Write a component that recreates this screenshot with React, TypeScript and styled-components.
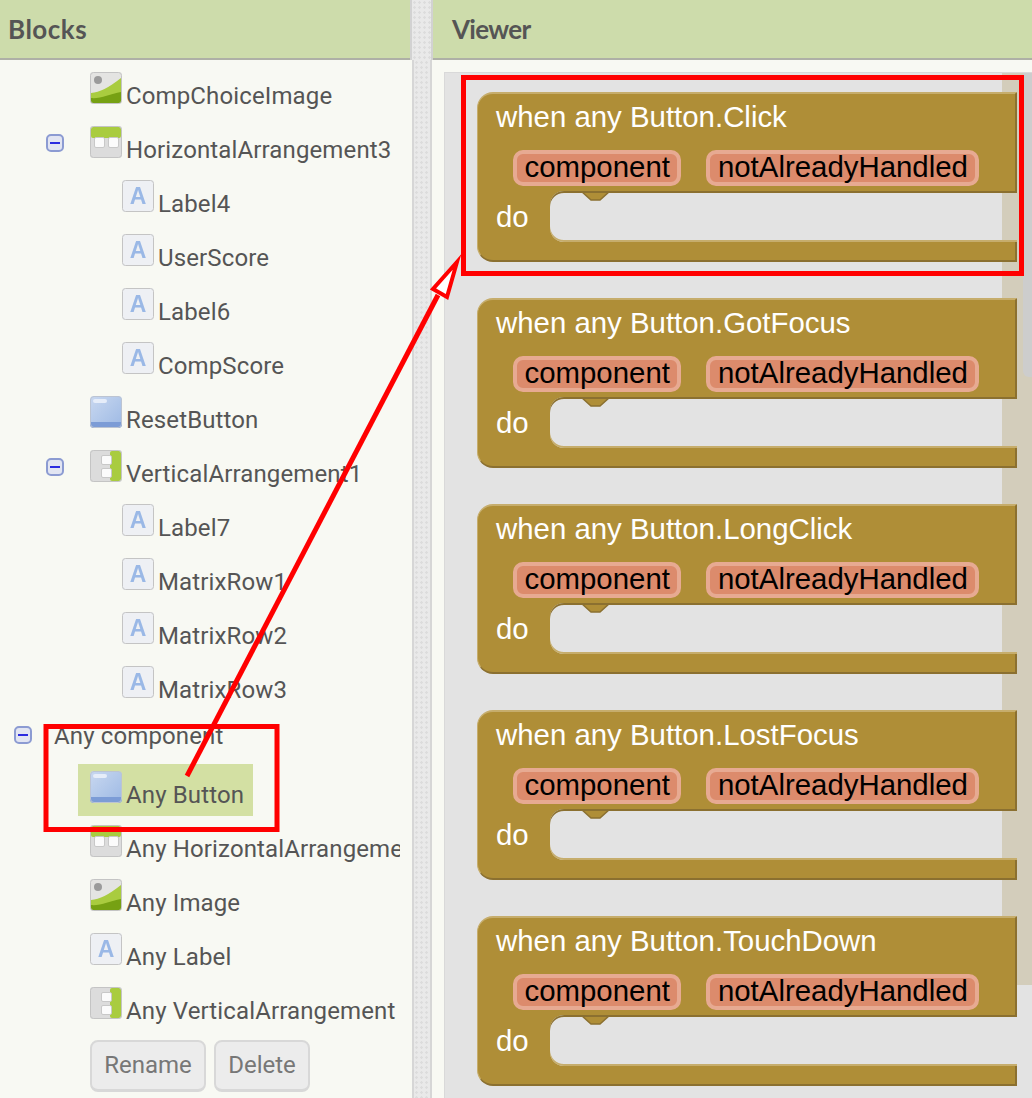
import React from 'react';
import styled, { createGlobalStyle } from 'styled-components';

const GOLD = '#af8e37';
const GOLD_LIGHT = '#c6ad6c';
const GOLD_DARK = '#8b7030';
const CREAM = '#f8f9f3';

const GlobalStyle = createGlobalStyle`
  html, body {
    margin: 0;
    padding: 0;
    background: ${CREAM};
    overflow: hidden;
  }
`;

const Page = styled.div`
  position: relative;
  display: flex;
  width: 1032px;
  height: 1098px;
  overflow: hidden;
  background: ${CREAM};
  font-family: Roboto, sans-serif;
  color: #555;
`;

const Pane = styled.div<{ $width?: number }>`
  display: flex;
  flex-direction: column;
  flex: ${(p) => (p.$width ? `0 0 ${p.$width}px` : '1 1 0')};
  min-width: 0;
`;

const PaneHeader = styled.div<{ $pad: number; $spacing: number }>`
  box-sizing: border-box;
  flex: 0 0 60px;
  height: 60px;
  padding-left: ${(p) => p.$pad}px;
  background: #cddcab;
  border-bottom: 2px solid #aeb0a6;
  font-family: Lato, sans-serif;
  font-weight: 700;
  font-size: 26px;
  line-height: 58px;
  letter-spacing: ${(p) => p.$spacing}px;
  color: #555;
`;

const SPECKLE = `
  background-color: #e9e9e9;
  background-image: radial-gradient(circle, #dcdcdc 1px, transparent 1.5px);
  background-size: 5px 5px;
`;

const Splitter = styled.div`
  flex: 0 0 23px;
  display: flex;
  flex-direction: column;
  background: ${CREAM};
`;

const SplitterCap = styled.div`
  box-sizing: border-box;
  flex: 0 0 60px;
  ${SPECKLE}
  border-left: 2px solid #d2d2d2;
  border-right: 2px solid #d2d2d2;
`;

const SplitterBar = styled.div`
  box-sizing: border-box;
  flex: 1;
  margin: 0 1px 0 2px;
  ${SPECKLE}
  border-left: 2px solid #d6d6d6;
  border-right: 2px solid #d6d6d6;
`;

const Tree = styled.div`
  flex: 1;
  width: 400px;
  padding-top: 5px;
  overflow: hidden;
`;

const Row = styled.div<{ $indent: number; $short?: boolean }>`
  display: flex;
  align-items: flex-start;
  height: ${(p) => (p.$short ? 49 : 52)}px;
  margin-bottom: 2px;
  padding-left: ${(p) => p.$indent}px;
  white-space: nowrap;
`;

const Toggle = styled.span<{ $top: number }>`
  box-sizing: border-box;
  flex: 0 0 18px;
  display: flex;
  align-items: center;
  justify-content: center;
  width: 18px;
  height: 18px;
  margin: ${(p) => p.$top}px 14px 0 -32px;
  background: #e2e5f2;
  border: 2px solid #8c9bd2;
  border-radius: 5px;

  &::after {
    content: '';
    width: 10px;
    height: 2px;
    background: #2c2ce0;
  }
`;

const Item = styled.div<{ $selected?: boolean; $bare?: boolean }>`
  display: flex;
  align-items: flex-start;
  gap: 4px;
  height: 100%;
  padding: 0 9px 0 ${(p) => (p.$bare ? 8 : 12)}px;
  background: ${(p) => (p.$selected ? '#d3e0a3' : 'transparent')};
`;

const IconBox = styled.svg`
  flex: 0 0 32px;
  width: 32px;
  height: 32px;
  margin-top: 7px;
  filter: blur(0.4px);
`;

const ItemLabel = styled.span<{ $top: number }>`
  margin-top: ${(p) => p.$top}px;
  font-size: 24px;
  line-height: 30px;
  letter-spacing: 0.13px;
  color: #555;
`;

const Actions = styled.div`
  display: flex;
  gap: 8px;
  margin: 8px 0 0 90px;
`;

const ActionButton = styled.div<{ $width: number }>`
  box-sizing: border-box;
  width: ${(p) => p.$width}px;
  height: 52px;
  background: #ececec;
  border: 2px solid #d8d8d8;
  border-bottom-width: 3px;
  border-radius: 8px;
  font-size: 24px;
  line-height: 47px;
  text-align: center;
  color: #777;
`;

const Gutter = styled.div`
  flex: 1;
  min-height: 0;
  padding: 12px 0 0 11px;
  background: ${CREAM};
`;

const Viewer = styled.div`
  position: relative;
  box-sizing: border-box;
  height: 100%;
  padding: 19px 0 0 32px;
  overflow: hidden;
  background: #e3e3e3;
  border-top: 1px solid #d9d9d9;
  border-left: 1px solid #d9d9d9;
`;

const ScrollTrack = styled.div`
  position: absolute;
  top: 0;
  right: 0;
  width: 30px;
  height: 912px;
  background: #d3cdbb;
`;

const ScrollThumb = styled.div`
  position: absolute;
  top: 0;
  right: 0;
  width: 9px;
  height: 304px;
  background: #cdcdcd;
  border-bottom-left-radius: 6px;
`;

const Block = styled.div`
  position: relative;
  display: flex;
  flex-direction: column;
  width: 540px;
  height: 170px;
  margin-bottom: 36px;
  font-family: 'Liberation Sans', Arial, sans-serif;
  font-size: 29.4px;
`;

const BlockHead = styled.div`
  box-sizing: border-box;
  height: 99px;
  padding: 6px 0 0 18px;
  background: ${GOLD};
  border-top: 2px solid ${GOLD_LIGHT};
  border-left: 1px solid ${GOLD_LIGHT};
  border-right: 2px solid ${GOLD_DARK};
  border-top-left-radius: 16px;
`;

const BlockTitle = styled.div`
  height: 34px;
  line-height: 34px;
  color: #fff;
`;

const Params = styled.div`
  display: flex;
  gap: 25px;
  margin: 16px 0 0 17px;
`;

const Param = styled.div`
  box-sizing: border-box;
  height: 36px;
  padding: 0 7.5px;
  background: #dc8b6c;
  border: 4px solid #e7aa92;
  border-radius: 10px;
  line-height: 26px;
  color: #000;
  white-space: nowrap;
`;

const BlockBody = styled.div`
  display: flex;
  height: 51px;
  overflow: hidden;
`;

const DoLabel = styled.div`
  position: relative;
  z-index: 1;
  box-sizing: border-box;
  flex: 0 0 60px;
  padding-left: 18px;
  border-left: 1px solid ${GOLD_LIGHT};
  line-height: 51px;
  color: #fff;
`;

const Slot = styled.div`
  position: relative;
  flex: 1;
  margin-left: 13px;
  border-radius: 14px 0 0 14px;
  box-shadow:
    inset 0 2px 0 ${GOLD_DARK},
    inset 0 -2px 0 ${GOLD_LIGHT},
    0 0 0 80px ${GOLD};
`;

const Notch = styled.svg`
  position: absolute;
  top: 0;
  left: 30px;
  width: 32px;
  height: 12px;
`;

const BlockFoot = styled.div`
  box-sizing: border-box;
  height: 20px;
  background: ${GOLD};
  border-left: 1px solid ${GOLD_LIGHT};
  border-right: 2px solid ${GOLD_DARK};
  border-bottom: 2px solid ${GOLD_DARK};
  border-bottom-left-radius: 16px;
`;

const Annotations = styled.svg`
  position: absolute;
  top: 0;
  left: 0;
  width: 1032px;
  height: 1098px;
  pointer-events: none;
`;

type IconKind = 'image' | 'horizontal' | 'vertical' | 'label' | 'button';

function Icon({ kind }: { kind: IconKind }) {
  const frame = (
    <rect x="0.5" y="0.5" width="31" height="31" rx="3" fill="none" stroke="#c4c4c4" />
  );
  if (kind === 'image') {
    return (
      <IconBox viewBox="0 0 32 32">
        <rect width="32" height="32" rx="3" fill="#e4e4e2" />
        <circle cx="8" cy="8" r="4" fill="#9b9b9b" />
        <path d="M1 21 C10 20 18 16 31 6 V31 H1 Z" fill="#a9cc3f" />
        <path d="M1 26 C10 27 20 22 31 20 V31 H1 Z" fill="#76a113" />
        {frame}
      </IconBox>
    );
  }
  if (kind === 'horizontal') {
    return (
      <IconBox viewBox="0 0 32 32">
        <rect width="32" height="32" rx="3" fill="#dcdcdc" />
        <rect x="1" y="1" width="30" height="11" rx="2" fill="#a9cc3f" />
        <rect x="4.5" y="11.5" width="10" height="10" rx="1.5" fill="#fbfbfb" stroke="#c8c8c8" />
        <rect x="18.5" y="11.5" width="10" height="10" rx="1.5" fill="#fbfbfb" stroke="#c8c8c8" />
        {frame}
      </IconBox>
    );
  }
  if (kind === 'vertical') {
    return (
      <IconBox viewBox="0 0 32 32">
        <rect width="32" height="32" rx="3" fill="#dcdcdc" />
        <rect x="20" y="1" width="11" height="30" rx="2" fill="#a9cc3f" />
        <rect x="11.5" y="5.5" width="10" height="9" rx="1.5" fill="#fbfbfb" stroke="#c8c8c8" />
        <rect x="11.5" y="18.5" width="10" height="9" rx="1.5" fill="#fbfbfb" stroke="#c8c8c8" />
        {frame}
      </IconBox>
    );
  }
  if (kind === 'label') {
    return (
      <IconBox viewBox="0 0 32 32">
        <rect width="32" height="32" rx="3" fill="#eef0f4" />
        <text
          x="16"
          y="24"
          textAnchor="middle"
          fontFamily="'Liberation Sans', sans-serif"
          fontWeight="700"
          fontSize="23"
          fill="#9ab8e6"
        >
          A
        </text>
        {frame}
      </IconBox>
    );
  }
  return (
    <IconBox viewBox="0 0 32 32">
      <defs>
        <linearGradient id="btnFill" x1="0" y1="0" x2="1" y2="1">
          <stop offset="0" stopColor="#c9d8f0" />
          <stop offset="1" stopColor="#9db9e4" />
        </linearGradient>
      </defs>
      <rect width="32" height="32" rx="4" fill="url(#btnFill)" />
      <rect x="3" y="3" width="14" height="4" rx="2" fill="#e6edf9" />
      <path d="M0 26 H32 V28 a4 4 0 0 1 -4 4 H4 a4 4 0 0 1 -4 -4 Z" fill="#7c9cd6" />
      <rect x="0.5" y="0.5" width="31" height="31" rx="3.5" fill="none" stroke="#bcc4d2" />
    </IconBox>
  );
}

type Node = {
  name: string;
  icon?: IconKind;
  indent: number;
  toggle?: boolean;
  selected?: boolean;
};

const nodes: Node[] = [
  { name: 'CompChoiceImage', icon: 'image', indent: 78 },
  { name: 'HorizontalArrangement3', icon: 'horizontal', indent: 78, toggle: true },
  { name: 'Label4', icon: 'label', indent: 110 },
  { name: 'UserScore', icon: 'label', indent: 110 },
  { name: 'Label6', icon: 'label', indent: 110 },
  { name: 'CompScore', icon: 'label', indent: 110 },
  { name: 'ResetButton', icon: 'button', indent: 78 },
  { name: 'VerticalArrangement1', icon: 'vertical', indent: 78, toggle: true },
  { name: 'Label7', icon: 'label', indent: 110 },
  { name: 'MatrixRow1', icon: 'label', indent: 110 },
  { name: 'MatrixRow2', icon: 'label', indent: 110 },
  { name: 'MatrixRow3', icon: 'label', indent: 110 },
  { name: 'Any component', indent: 46, toggle: true },
  { name: 'Any Button', icon: 'button', indent: 78, selected: true },
  { name: 'Any HorizontalArrangement', icon: 'horizontal', indent: 78 },
  { name: 'Any Image', icon: 'image', indent: 78 },
  { name: 'Any Label', icon: 'label', indent: 78 },
  { name: 'Any VerticalArrangement', icon: 'vertical', indent: 78 },
];

const events = ['Click', 'GotFocus', 'LongClick', 'LostFocus', 'TouchDown'];

function EventBlock({ name }: { name: string }) {
  return (
    <Block>
      <BlockHead>
        <BlockTitle>when any Button.{name}</BlockTitle>
        <Params>
          <Param>component</Param>
          <Param>notAlreadyHandled</Param>
        </Params>
      </BlockHead>
      <BlockBody>
        <DoLabel>do</DoLabel>
        <Slot>
          <Notch viewBox="0 0 32 12">
            <path d="M1 0 L11 9 H20 L30 0 Z" fill={GOLD} stroke={GOLD_DARK} strokeWidth="1.5" />
            <path d="M0 0 H32 V2 H0 Z" fill={GOLD_DARK} />
          </Notch>
        </Slot>
      </BlockBody>
      <BlockFoot />
    </Block>
  );
}

export default function App() {
  return (
    <Page>
      <GlobalStyle />
      <Pane $width={410}>
        <PaneHeader $pad={8} $spacing={0.5}>Blocks</PaneHeader>
        <Tree>
          {nodes.map((n) => (
            <Row key={n.name} $indent={n.indent} $short={!n.icon}>
              {n.toggle && <Toggle $top={n.icon ? 15 : 13} />}
              <Item $selected={n.selected} $bare={!n.icon}>
                {n.icon && <Icon kind={n.icon} />}
                <ItemLabel $top={n.icon ? 16 : 8}>{n.name}</ItemLabel>
              </Item>
            </Row>
          ))}
          <Actions>
            <ActionButton $width={116}>Rename</ActionButton>
            <ActionButton $width={96}>Delete</ActionButton>
          </Actions>
        </Tree>
      </Pane>
      <Splitter>
        <SplitterCap />
        <SplitterBar />
      </Splitter>
      <Pane>
        <PaneHeader $pad={19} $spacing={-0.7}>Viewer</PaneHeader>
        <Gutter>
          <Viewer>
            <ScrollTrack />
            <ScrollThumb />
            {events.map((e) => (
              <EventBlock key={e} name={e} />
            ))}
          </Viewer>
        </Gutter>
      </Pane>
      <Annotations viewBox="0 0 1032 1098">
        <rect x="463.5" y="77.5" width="558" height="196" fill="none" stroke="#ff0000" strokeWidth="5" />
        <rect x="46" y="726.5" width="231" height="103" fill="none" stroke="#ff0000" strokeWidth="5" />
        <line x1="187" y1="776" x2="438" y2="295" stroke="#ff0000" strokeWidth="5" />
        <polygon
          points="457,262 433,289 447,297"
          fill="#fff"
          stroke="#ff0000"
          strokeWidth="4"
          strokeMiterlimit="20"
        />
      </Annotations>
    </Page>
  );
}
